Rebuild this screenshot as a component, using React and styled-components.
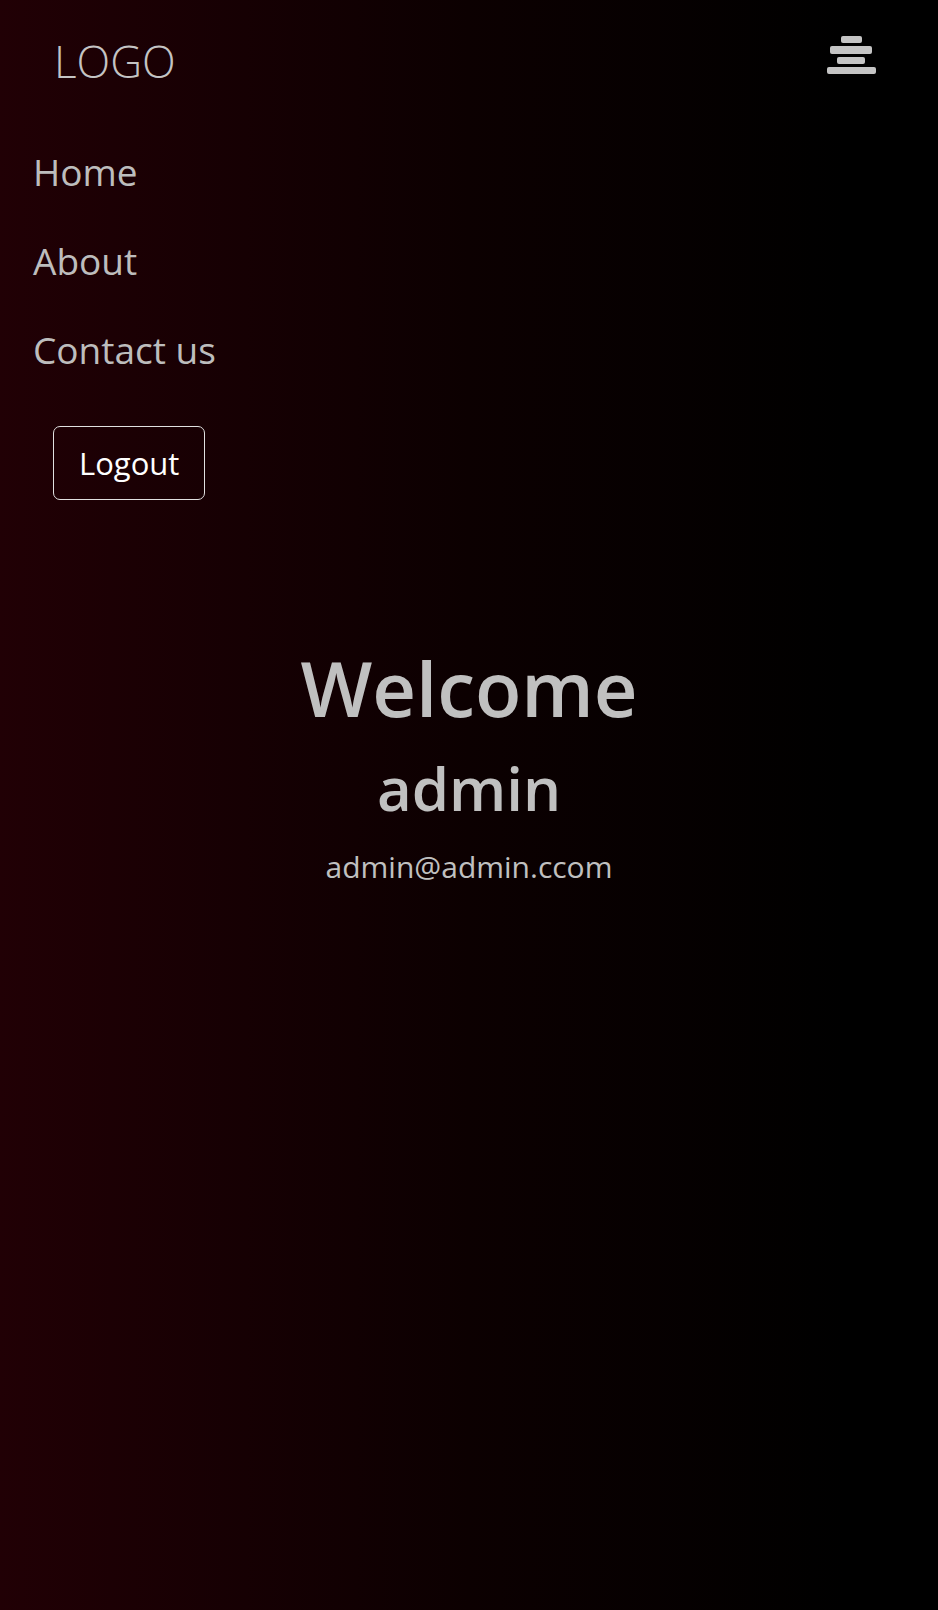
import React from 'react'
import styled, {createGlobalStyle} from 'styled-components'

const GlobalStyle = createGlobalStyle`
  * { box-sizing: border-box; }
  html, body {
    margin: 0;
    padding: 0;
    background: #000;
  }
  body {
    font-family: "Open Sans", "Noto Sans", sans-serif;
  }
`

const Page = styled.div`
  min-height: 100vh;
  background: linear-gradient(to right, #210005 0%, #0c0001 50%, #000 90%);
  color: #c0c0c0;
`

const Header = styled.header`
  display: flex;
  justify-content: space-between;
  align-items: flex-start;
  padding: 36px 62px 0 54px;
`

const Logo = styled.div`
  margin-top: 3px;
  font-size: 44px;
  font-weight: 300;
  line-height: 44px;
  color: #c4c4c4;
`

const MenuButton = styled.button`
  display: block;
  padding: 0;
  border: none;
  background: none;
  cursor: pointer;
`

const Nav = styled.ul`
  list-style: none;
  margin: 0;
  padding: 0 0 0 33px;
  margin-top: 44px;
`

const NavItem = styled.li`
  font-size: 37px;
  line-height: 89px;
  color: #bdbdbd;
`

const LogoutButton = styled.button`
  display: block;
  margin: 32px 0 0 53px;
  height: 74px;
  padding: 0 25px;
  font-family: inherit;
  font-size: 31px;
  color: #fff;
  background: transparent;
  border: 1.5px solid #e0e0e0;
  border-radius: 7px;
`

const Main = styled.main`
  margin-top: 142px;
  text-align: center;
`

const Title = styled.h1`
  margin: 0;
  font-size: 76px;
  font-weight: 600;
  line-height: 1.2;
`

const UserName = styled.h2`
  margin: 19px 0 0;
  font-size: 60px;
  font-weight: 600;
  line-height: 1.2;
`

const Email = styled.p`
  margin: 25px 0 0;
  font-size: 30px;
  line-height: 1.2;
`

const MenuIcon = () => (
  <svg width="49" height="38" viewBox="0 0 49 38" fill="#c4c4c4">
    <rect x="14" y="0" width="21" height="7" rx="2" />
    <rect x="3" y="10" width="42" height="8" rx="2" />
    <rect x="10" y="21" width="28" height="7" rx="2" />
    <rect x="0" y="31" width="49" height="7" rx="2" />
  </svg>
)

export default function App() {
  return (
    <Page>
      <GlobalStyle />
      <Header>
        <Logo>LOGO</Logo>
        <MenuButton aria-label="menu">
          <MenuIcon />
        </MenuButton>
      </Header>
      <Nav>
        <NavItem>Home</NavItem>
        <NavItem>About</NavItem>
        <NavItem>Contact us</NavItem>
      </Nav>
      <LogoutButton>Logout</LogoutButton>
      <Main>
        <Title>Welcome</Title>
        <UserName>admin</UserName>
        <Email>admin@admin.ccom</Email>
      </Main>
    </Page>
  )
}
